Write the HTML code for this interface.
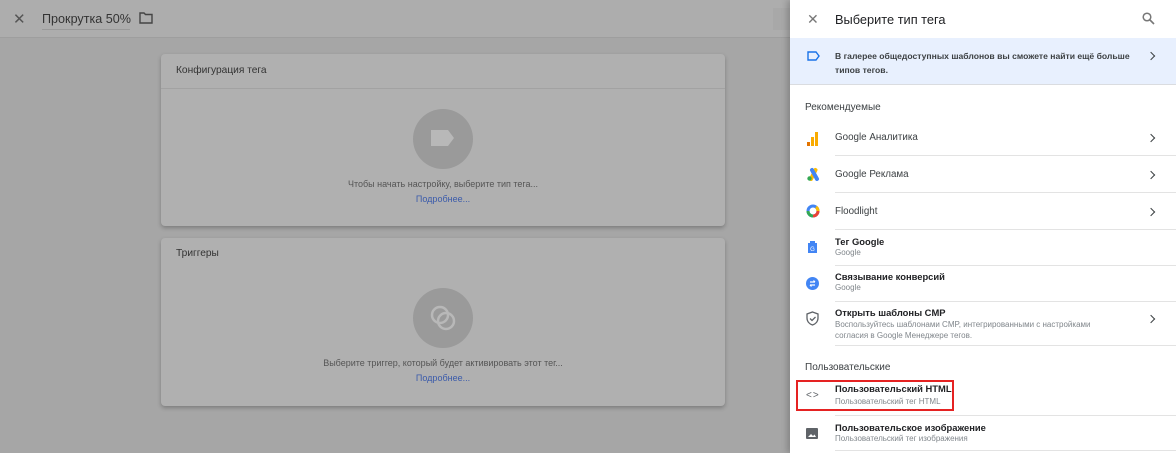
<!DOCTYPE html>
<html><head><meta charset="utf-8"><style>
*{margin:0;padding:0;box-sizing:border-box}
body{width:1176px;height:453px;overflow:hidden;background:#a6a6a6;font-family:"Liberation Sans",Arial,sans-serif;position:relative}
.abs{position:absolute}
.hdr{left:0;top:0;width:790px;height:38px;background:#adadad;border-bottom:1px solid #9e9e9e}
.card{background:#b0b0b0;border-radius:4px;box-shadow:0 2px 4px rgba(0,0,0,.25)}
.panel{left:790px;top:0;width:386px;height:453px;background:#fff;box-shadow:-3px 0 6px rgba(0,0,0,.2)}
.t{position:absolute;white-space:nowrap}
.div{position:absolute;left:45px;right:0;height:1px;background:#e3e3e3}
.chev{position:absolute;left:358px;width:6px;height:6px;border-top:1.6px solid #3c4043;border-right:1.6px solid #3c4043;transform:rotate(45deg)}
.nm{font-size:9.4px;color:#202124;font-weight:bold}
.nm2{font-size:9.8px;color:#3c4043}
.sub{font-size:8px;color:#80868b}
</style></head><body>
<div class="abs hdr">
  <div class="t" style="left:13px;top:10px;font-size:15px;color:#555">✕</div>
  <div class="t" style="left:42px;top:12px;font-size:12.6px;color:#333">Прокрутка 50%</div>
  <div class="abs" style="left:42px;top:29px;width:88px;height:1px;background:#999"></div>
  <svg class="abs" style="left:139px;top:12px" width="14" height="12" viewBox="0 0 14 12"><path d="M1 1h4l1.5 1.5H13V11H1z" fill="none" stroke="#444" stroke-width="1.4"/></svg>
  <div class="abs" style="left:773px;top:8px;width:17px;height:22px;background:#a8a8a8"></div>
</div>
<div class="abs card" style="left:161px;top:54px;width:564px;height:172px">
  <div class="t" style="left:15px;top:11px;font-size:10.2px;color:#333">Конфигурация тега</div>
  <div class="abs" style="left:0;top:34px;width:564px;height:1px;background:#a2a2a2"></div>
  <div class="abs" style="left:252px;top:55px;width:60px;height:60px;border-radius:50%;background:#9a9a9a"></div>
  <svg class="abs" style="left:269px;top:75px" width="26" height="18" viewBox="0 0 26 18"><path d="M1 1H18L24 9L18 17H1Z" fill="#b8b8b8"/></svg>
  <div class="t" style="left:0;width:564px;text-align:center;top:125px;font-size:9px;color:#555">Чтобы начать настройку, выберите тип тега...</div>
  <div class="t" style="left:0;width:564px;text-align:center;top:140px;font-size:9px;color:#3b5bab">Подробнее...</div>
</div>
<div class="abs card" style="left:161px;top:238px;width:564px;height:168px">
  <div class="t" style="left:15px;top:10px;font-size:10.2px;color:#333">Триггеры</div>
  <div class="abs" style="left:252px;top:50px;width:60px;height:60px;border-radius:50%;background:#9a9a9a"></div>
  <svg class="abs" style="left:268px;top:66px" width="28" height="28" viewBox="0 0 28 28"><circle cx="11" cy="11" r="8" fill="none" stroke="#b8b8b8" stroke-width="2.5"/><circle cx="17" cy="17" r="8" fill="none" stroke="#b8b8b8" stroke-width="2.5"/></svg>
  <div class="t" style="left:0;width:564px;text-align:center;top:120px;font-size:9px;color:#555">Выберите триггер, который будет активировать этот тег...</div>
  <div class="t" style="left:0;width:564px;text-align:center;top:135px;font-size:9px;color:#3b5bab">Подробнее...</div>
</div>

<div class="abs panel">
  <div class="t" style="left:17px;top:11px;font-size:14px;color:#777">✕</div>
  <div class="t" style="left:45px;top:12px;font-size:12.8px;color:#202124">Выберите тип тега</div>
  <svg class="abs" style="left:352px;top:12px" width="13" height="13" viewBox="0 0 13 13"><circle cx="5" cy="5" r="3.8" fill="none" stroke="#777" stroke-width="1.5"/><path d="M8 8l4 4" stroke="#777" stroke-width="1.6"/></svg>
  <div class="abs" style="left:0;top:38px;width:386px;height:47px;background:#e8f0fe;border-bottom:1px solid #dadce0"></div>
  <svg class="abs" style="left:17px;top:51px" width="13" height="10" viewBox="0 0 13 10"><path d="M1 1H9L12 5L9 9H1Z" fill="none" stroke="#1a73e8" stroke-width="1.4"/></svg>
  <div class="t" style="left:45px;top:49px;font-size:8.6px;color:#3c4043;font-weight:bold;line-height:14px">В галерее общедоступных шаблонов вы сможете найти ещё больше<br>типов тегов.</div>
  <div class="chev" style="top:53px"></div>
  <div class="t" style="left:15px;top:102px;font-size:10px;color:#3c4043">Рекомендуемые</div>

  <svg class="abs" style="left:17px;top:131px" width="12" height="16" viewBox="0 0 12 16"><rect x="0" y="11" width="3" height="4" fill="#e37400"/><rect x="4" y="6" width="3" height="9" fill="#f9ab00"/><rect x="8" y="1" width="3" height="14" fill="#f9ab00"/></svg>
  <div class="t nm2" style="left:45px;top:132px">Google Аналитика</div>
  <div class="chev" style="top:135px"></div>
  <div class="div" style="top:155px"></div>

  <svg class="abs" style="left:16px;top:167px" width="15" height="14" viewBox="0 0 15 14"><path d="M5 12L9.5 3" stroke="#fbbc04" stroke-width="4" stroke-linecap="round"/><path d="M6 3L11 12" stroke="#4285f4" stroke-width="4" stroke-linecap="round"/><circle cx="3.5" cy="11.5" r="2.2" fill="#34a853"/></svg>
  <div class="t nm2" style="left:45px;top:169px">Google Реклама</div>
  <div class="chev" style="top:172px"></div>
  <div class="div" style="top:192px"></div>

  <svg class="abs" style="left:16px;top:204px" width="14" height="14" viewBox="0 0 14 14"><circle cx="7" cy="7" r="5" fill="none" stroke="#4285f4" stroke-width="3"/><path d="M2 7a5 5 0 0 0 5 5" fill="none" stroke="#34a853" stroke-width="3"/><path d="M7 12a5 5 0 0 0 5-5" fill="none" stroke="#ea4335" stroke-width="3"/><path d="M12 7a5 5 0 0 0-2-4" fill="none" stroke="#fbbc04" stroke-width="3"/></svg>
  <div class="t nm2" style="left:45px;top:206px">Floodlight</div>
  <div class="chev" style="top:209px"></div>
  <div class="div" style="top:229px"></div>

  <svg class="abs" style="left:17px;top:240px" width="11" height="14" viewBox="0 0 11 14"><path d="M3 1h5v2h2v10H1V3h2z" fill="#4285f4"/><text x="5.5" y="11" font-size="6" fill="#fff" text-anchor="middle" font-family="Liberation Sans">G</text></svg>
  <div class="t nm" style="left:45px;top:236px">Тег Google</div>
  <div class="t sub" style="left:45px;top:248px">Google</div>
  <div class="div" style="top:265px"></div>

  <svg class="abs" style="left:16px;top:277px" width="13" height="13" viewBox="0 0 13 13"><circle cx="6.5" cy="6.5" r="6.5" fill="#4285f4"/><path d="M4 5h5M7.5 3.5L9 5M9 8H4M5.5 9.5L4 8" stroke="#fff" stroke-width="1.2" fill="none"/></svg>
  <div class="t nm" style="left:45px;top:271px">Связывание конверсий</div>
  <div class="t sub" style="left:45px;top:283px">Google</div>
  <div class="div" style="top:301px"></div>

  <svg class="abs" style="left:16px;top:311px" width="13" height="15" viewBox="0 0 13 15"><path d="M6.5 1L12 3v4c0 3.5-2.5 6-5.5 7C3.5 13 1 10.5 1 7V3z" fill="none" stroke="#5f6368" stroke-width="1.3"/><path d="M4 7.5l2 2 3.5-3.5" fill="none" stroke="#5f6368" stroke-width="1.3"/></svg>
  <div class="t nm" style="left:45px;top:307px">Открыть шаблоны CMP</div>
  <div class="t sub" style="left:45px;top:319px;line-height:11px">Воспользуйтесь шаблонами CMP, интегрированными с настройками<br>согласия в Google Менеджере тегов.</div>
  <div class="chev" style="top:316px"></div>
  <div class="div" style="top:345px"></div>

  <div class="t" style="left:15px;top:362px;font-size:10px;color:#3c4043">Пользовательские</div>
  <div class="abs" style="left:6px;top:380px;width:158px;height:31px;border:2px solid #e52222"></div>
  <div class="t" style="left:16px;top:390px;font-size:10px;color:#5f6368;letter-spacing:1px">&lt;&gt;</div>
  <div class="t nm" style="left:45px;top:383px">Пользовательский HTML</div>
  <div class="t sub" style="left:45px;top:397px">Пользовательский тег HTML</div>
  <div class="div" style="top:415px"></div>

  <svg class="abs" style="left:16px;top:428px" width="12" height="11" viewBox="0 0 12 11"><rect width="12" height="11" rx="1" fill="#5f6368"/><path d="M2 9l3-3 2 2 1.5-1.5L10 9z" fill="#fff"/></svg>
  <div class="t nm" style="left:45px;top:422px">Пользовательское изображение</div>
  <div class="t sub" style="left:45px;top:434px">Пользовательский тег изображения</div>
  <div class="div" style="top:450px"></div>
</div>
</body></html>
